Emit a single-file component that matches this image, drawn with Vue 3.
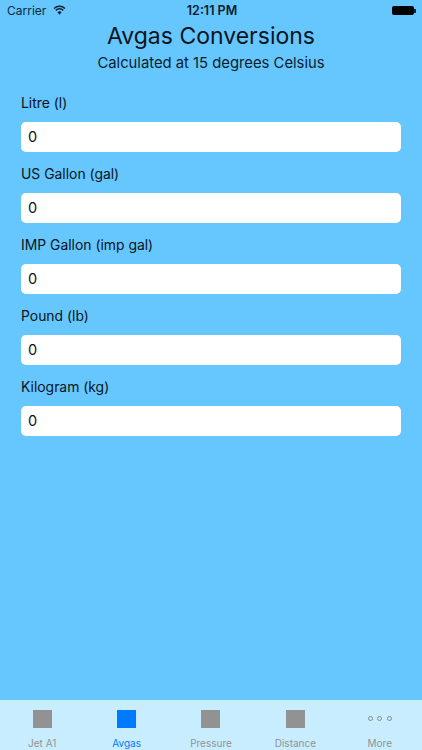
<script setup>
const fields = ['Litre (l)', 'US Gallon (gal)', 'IMP Gallon (imp gal)', 'Pound (lb)', 'Kilogram (kg)']
const tabs = [
  { label: 'Jet A1' },
  { label: 'Avgas', active: true },
  { label: 'Pressure' },
  { label: 'Distance' },
  { label: 'More', more: true },
]
</script>

<template>
  <div class="screen">
    <div class="status">
      <div class="status-left">
        <span>Carrier</span>
        <svg class="wifi" width="13" height="10" viewBox="0 0 14 11">
          <path d="M7 10.6 4.7 8a3.2 3.2 0 0 1 4.6 0z" fill="#0b1f33" />
          <path d="M2.9 5.9a5.8 5.8 0 0 1 8.2 0M1 3.8a8.6 8.6 0 0 1 12 0" fill="none" stroke="#0b1f33" stroke-width="1.6" />
        </svg>
      </div>
      <div class="status-time">12:11 PM</div>
      <div class="status-right">
        <div class="battery"></div>
        <div class="battery-tip"></div>
      </div>
    </div>

    <header class="head">
      <h1>Avgas Conversions</h1>
      <p>Calculated at 15 degrees Celsius</p>
    </header>

    <main class="form">
      <div v-for="f in fields" :key="f" class="field">
        <label>{{ f }}</label>
        <div class="input">0</div>
      </div>
    </main>

    <nav class="tabs">
      <div v-for="t in tabs" :key="t.label" class="tab" :class="{ active: t.active }">
        <div v-if="t.more" class="dots"><i></i><i></i><i></i></div>
        <div v-else class="square"></div>
        <span>{{ t.label }}</span>
      </div>
    </nav>
  </div>
</template>

<style scoped>
.screen {
  width: 422px;
  height: 750px;
  background: #66c7ff;
  display: flex;
  flex-direction: column;
  font-family: Inter, "Liberation Sans", sans-serif;
  color: #0a1420;
  overflow: hidden;
}
.status {
  height: 21px;
  padding: 0 5px 0 7px;
  display: grid;
  grid-template-columns: 1fr auto 1fr;
  align-items: center;
  font-size: 12px;
  color: #10283c;
}
.status-left {
  display: flex;
  align-items: center;
  gap: 7px;
}
.wifi {
  margin-top: -1px;
}
.status-time {
  font-weight: 600;
  font-size: 12.5px;
  color: #0a1c2c;
}
.status-right {
  display: flex;
  justify-content: flex-end;
  align-items: center;
  padding-right: 1.5px;
}
.battery {
  width: 22px;
  height: 8.5px;
  border-radius: 2px;
  background: #000;
}
.battery-tip {
  width: 1.5px;
  height: 4px;
  background: #10283c;
}
.head {
  text-align: center;
  padding-top: 1px;
}
.head h1 {
  margin: 0;
  font-size: 23px;
  font-weight: 400;
  line-height: 29px;
}
.head p {
  margin: 2px 0 0;
  font-size: 14.8px;
  line-height: 20px;
  color: #0a1c2c;
}
.form {
  flex: 1;
  padding: 20px 21px 0;
  display: flex;
  flex-direction: column;
  gap: 12px;
}
.field {
  display: flex;
  flex-direction: column;
  gap: 8px;
}
.field label {
  font-size: 13.9px;
  line-height: 21px;
}
.input {
  height: 30px;
  background: #fff;
  border-radius: 5px;
  padding: 0 7px;
  font-size: 14.5px;
  line-height: 30px;
}
.tabs {
  height: 50.5px;
  background: #c8edff;
  display: grid;
  grid-template-columns: repeat(5, 1fr);
}
.tab {
  display: flex;
  flex-direction: column;
  align-items: center;
  padding-top: 10px;
  color: #929292;
  font-size: 10px;
}
.tab span {
  margin-top: 9px;
  line-height: 12px;
}
.tab.active {
  color: #007aff;
}
.square {
  width: 19px;
  height: 18.5px;
  background: #929292;
}
.active .square {
  background: #007aff;
}
.dots {
  height: 18.5px;
  display: flex;
  align-items: center;
  gap: 4.5px;
}
.dots i {
  width: 5px;
  height: 5px;
  border: 1.2px solid #888;
  border-radius: 50%;
  box-sizing: border-box;
}
</style>
